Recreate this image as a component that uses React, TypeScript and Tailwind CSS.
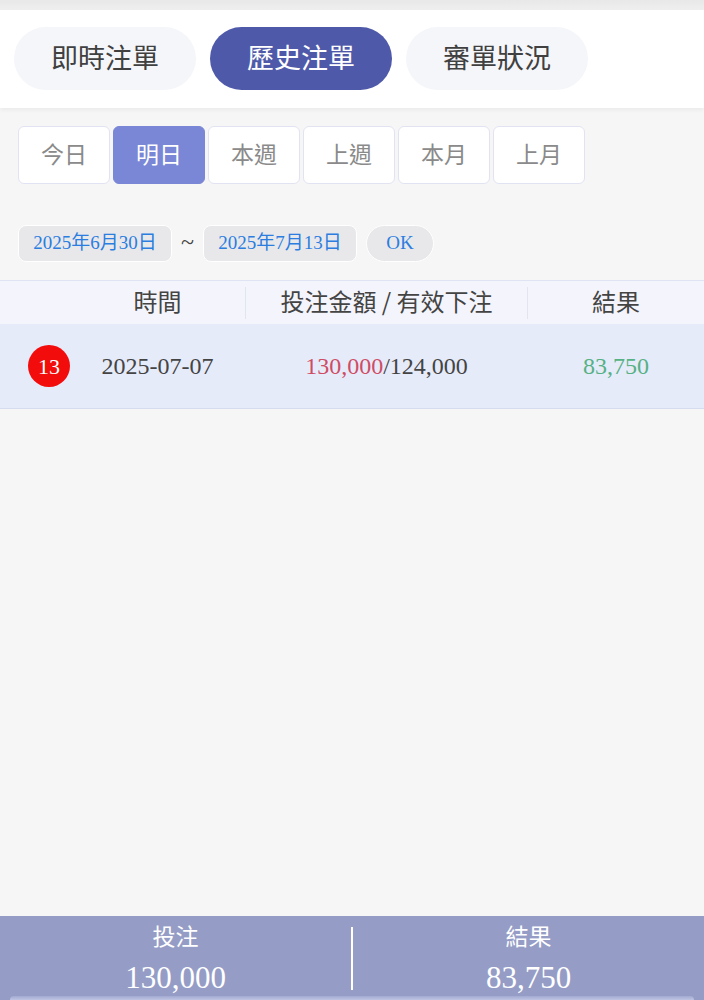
import React from "react";

const serif = "font-['Liberation_Serif','Noto_Sans_CJK_TC',serif]";
const sans = "font-['Noto_Sans_CJK_TC','Noto_Sans',sans-serif]";

export default function App() {
  const tabs = ["即時注單", "歷史注單", "審單狀況"];
  const ranges = ["今日", "明日", "本週", "上週", "本月", "上月"];
  return (
    <div className={`h-[1000px] w-[704px] flex flex-col bg-[#f6f6f6] overflow-hidden ${sans}`}>
      <div className="h-[10px] bg-gradient-to-b from-[#e8e8e8] to-[#efefef]" />
      <div className="bg-white flex gap-[14px] px-[14px] pt-[17px] pb-[18px] shadow-[0_2px_4px_rgba(0,0,0,0.05)]">
        {tabs.map((t, i) => (
          <div
            key={t}
            className={`w-[182px] h-[63px] rounded-full flex items-center justify-center text-[27px] pb-[2px] ${
              i === 1 ? "bg-[#4e5aa9] text-white" : "bg-[#f5f6fa] text-[#404040]"
            }`}
          >
            {t}
          </div>
        ))}
      </div>

      <div className="flex gap-[3px] px-[18px] mt-[18px]">
        {ranges.map((r, i) => (
          <div
            key={r}
            className={`w-[92px] h-[58px] rounded-[6px] flex items-center justify-center text-[23px] pb-[4px] border ${
              i === 1
                ? "bg-[#7987d6] text-white border-[#7987d6]"
                : "bg-white text-[#8a8a8a] border-[#e1e3f2]"
            }`}
          >
            {r}
          </div>
        ))}
      </div>

      <div className={`h-[37px] flex items-center px-[18px] mt-[41px] ${serif}`}>
        <div className="w-[154px] h-[37px] rounded-[8px] bg-[#e8e8ea] border border-white flex items-center justify-center text-[19px] text-[#2b7de0]">
          2025年6月30日
        </div>
        <div className="w-[31px] text-center text-[24px] leading-none text-[#444] pb-[4px]">~</div>
        <div className="w-[154px] h-[37px] rounded-[8px] bg-[#e8e8ea] border border-white flex items-center justify-center text-[19px] text-[#2b7de0]">
          2025年7月13日
        </div>
        <div className="ml-[9px] w-[68px] h-[37px] rounded-full bg-[#e8e8ea] border border-white flex items-center justify-center text-[19px] text-[#2b7de0]">
          OK
        </div>
      </div>

      <div className="mt-[18px] h-[44px] flex items-center bg-[#f4f5fc] border-t border-[#e0e3f3] text-[24px] text-[#444]">
        <div className="w-[245px] pl-[70px] text-center pb-[4px]">時間</div>
        <div className="w-[1px] h-[32px] bg-[#e2e4ee]" />
        <div className="w-[281px] text-center pb-[4px]">投注金額 / 有效下注</div>
        <div className="w-[1px] h-[32px] bg-[#e2e4ee]" />
        <div className="flex-1 text-center pb-[4px]">結果</div>
      </div>

      <div className={`h-[85px] flex items-center bg-[#e6ebfa] border-b border-[#d6dcf0] text-[24px] text-[#444] ${serif}`}>
        <div className="w-[70px] pl-[28px]">
          <div className="w-[42px] h-[42px] rounded-full bg-[#f20c0c] text-white text-[22px] flex items-center justify-center">
            13
          </div>
        </div>
        <div className="w-[175px] text-center">2025-07-07</div>
        <div className="w-[283px] text-center">
          <span className="text-[#cf4d64]">130,000</span>/124,000
        </div>
        <div className="flex-1 text-center text-[#56b184]">83,750</div>
      </div>

      <div className="flex-1" />

      <div className="h-[84px] bg-[#959dc6] flex flex-col text-white">
        <div className="flex-1 flex items-start pt-[6px]">
          <div className="flex-1 flex flex-col items-center">
            <div className="text-[23px] leading-[26px]">投注</div>
            <div className={`${serif} text-[31px] leading-[36px] mt-[12px]`}>130,000</div>
          </div>
          <div className="w-[2px] h-[63px] bg-white mt-[5px]" />
          <div className="flex-1 flex flex-col items-center">
            <div className="text-[23px] leading-[26px]">結果</div>
            <div className={`${serif} text-[31px] leading-[36px] mt-[12px]`}>83,750</div>
          </div>
        </div>
        <div className="mx-[10px] h-[6px] rounded-t-[14px] bg-gradient-to-b from-[#a3aad2] to-[#bfc4e2]" />
      </div>
    </div>
  );
}
